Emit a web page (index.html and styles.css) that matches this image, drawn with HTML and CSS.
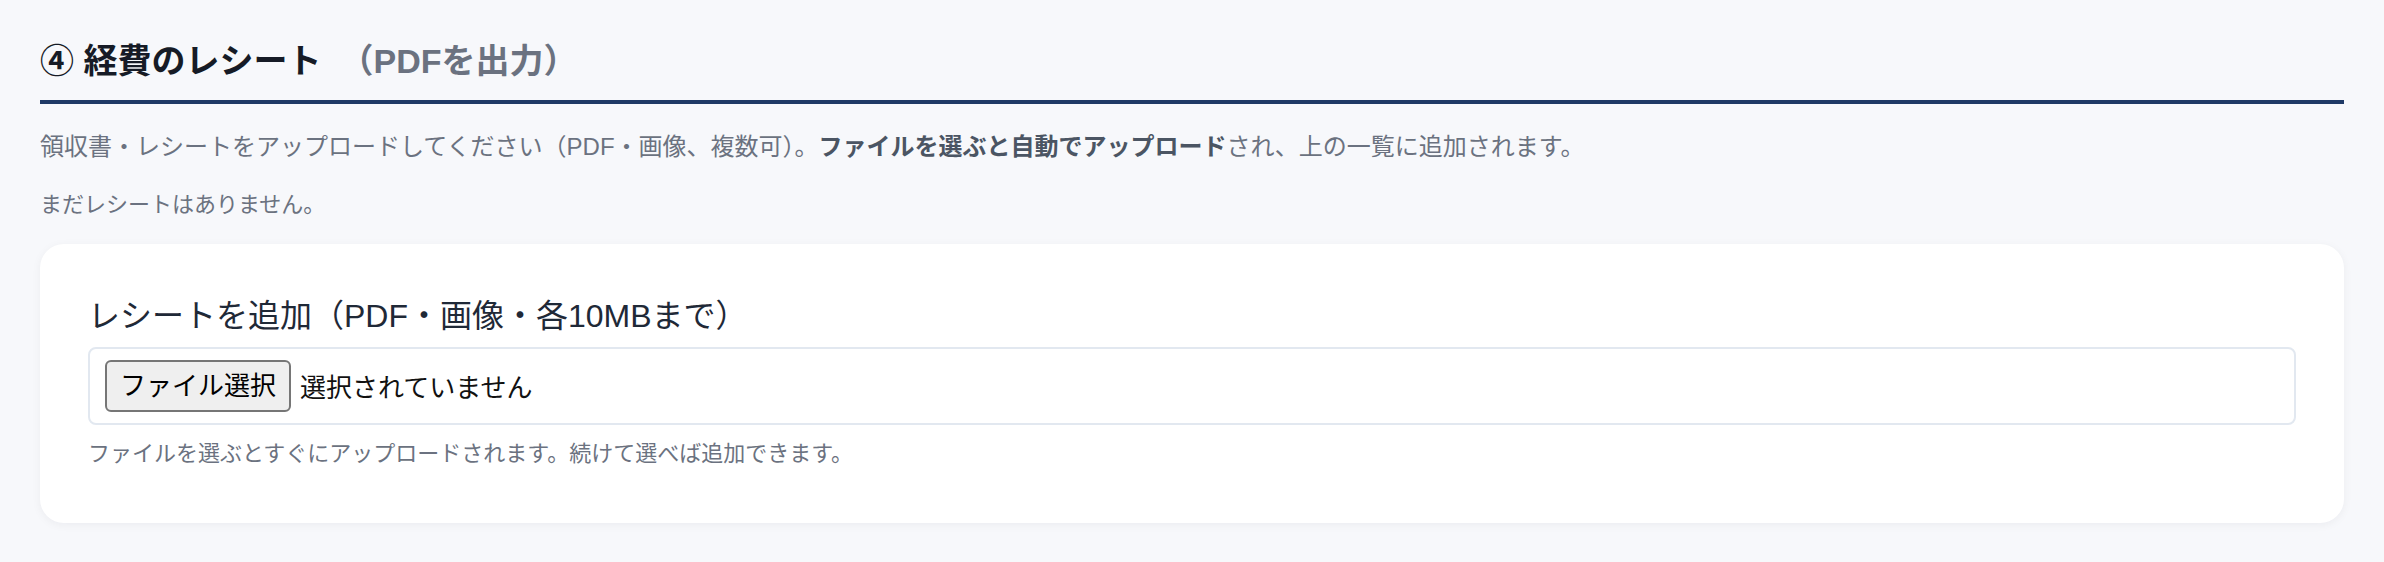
FILE: index.html
```html
<!DOCTYPE html>
<html lang="ja">
<head>
<meta charset="utf-8">
<title>経費のレシート</title>
<link rel="stylesheet" href="styles.css">
</head>
<body>
<main class="page">
  <section class="section">
    <h2 class="section-title">④ 経費のレシート<span class="section-sub">（PDFを出力）</span></h2>
    <p class="desc">領収書・レシートをアップロードしてください（PDF・画像、複数可）。<strong>ファイルを選ぶと自動でアップロード</strong>され、上の一覧に追加されます。</p>
    <p class="empty">まだレシートはありません。</p>
    <div class="card">
      <label class="field-label">レシートを追加（PDF・画像・各10MBまで）</label>
      <div class="file-box">
        <button type="button" class="file-btn">ファイル選択</button>
        <span class="file-name">選択されていません</span>
      </div>
      <p class="hint">ファイルを選ぶとすぐにアップロードされます。続けて選べば追加できます。</p>
    </div>
  </section>
</main>
</body>
</html>
```

FILE: styles.css
```css
* {
  box-sizing: border-box;
}

html, body {
  margin: 0;
  padding: 0;
}

body {
  background: #f7f8fb;
  font-family: "Liberation Sans", "Noto Sans CJK JP", sans-serif;
  color: #1f2937;
}

.page {
  padding: 38px 40px 40px 40px;
}

.section-title {
  margin: 0;
  font-size: 34px;
  font-weight: 700;
  line-height: 1.4;
  color: #161b26;
  padding-bottom: 14px;
  border-bottom: 4px solid #1f3a66;
}

.section-sub {
  color: #6b7280;
  margin-left: 18px;
}

.desc {
  margin: 24px 0 0;
  font-size: 24px;
  line-height: 1.6;
  color: #6b7280;
}

.desc strong {
  color: #4b5563;
  font-weight: 700;
}

.empty {
  margin: 21px 0 0;
  font-size: 22px;
  line-height: 1.6;
  color: #6b7280;
}

.card {
  margin-top: 22px;
  background: #ffffff;
  border-radius: 24px;
  padding: 50px 48px 52px;
  box-shadow: 0 2px 10px rgba(15, 23, 42, 0.05);
}

.field-label {
  display: block;
  font-size: 32px;
  line-height: 1.4;
  color: #1f2937;
  margin-bottom: 8px;
}

.file-box {
  display: flex;
  align-items: center;
  height: 78px;
  padding: 0 15px;
  border: 2px solid #e2e8f0;
  border-radius: 8px;
  background: #ffffff;
}

.file-btn {
  height: 52px;
  padding: 0 13px;
  font-family: "Liberation Sans", "Noto Sans CJK JP", sans-serif;
  font-size: 26px;
  line-height: 1;
  color: #000000;
  background: #efefef;
  border: 2px solid #767676;
  border-radius: 6px;
}

.file-name {
  margin-left: 9px;
  font-size: 26px;
  color: #111111;
}

.hint {
  margin: 11px 0 0;
  font-size: 22px;
  line-height: 1.6;
  color: #6b7280;
}
```
